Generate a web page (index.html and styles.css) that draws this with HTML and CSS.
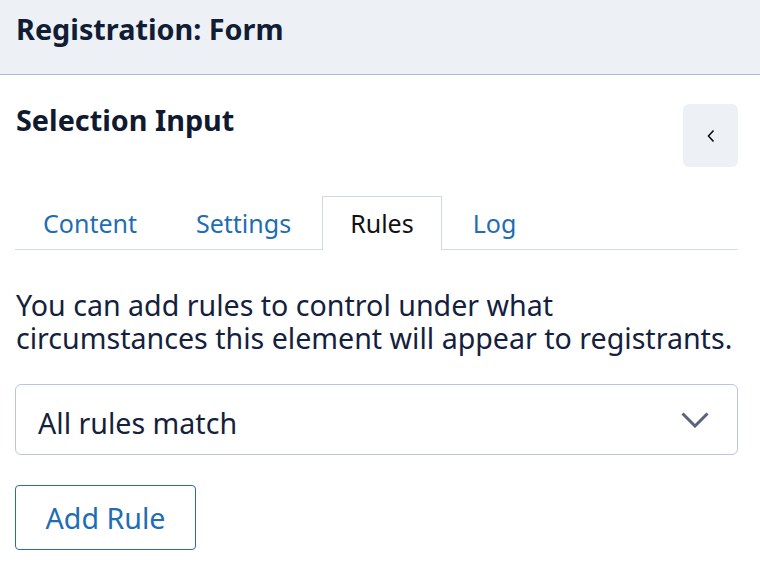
FILE: index.html
```html
<!DOCTYPE html>
<html>
<head>
<meta charset="utf-8">
<link rel="stylesheet" href="styles.css">
</head>
<body>
<header class="topbar">
  <h1 class="title">Registration: Form</h1>
</header>
<main class="panel">
  <div class="panel-head">
    <h2 class="subtitle">Selection Input</h2>
    <button class="back-btn" aria-label="Back">
      <svg width="10" height="14" viewBox="0 0 10 14"><path d="M7.5 1.5 L2.5 7 L7.5 12.5" fill="none" stroke="#111" stroke-width="1.6"/></svg>
    </button>
  </div>
  <nav class="tabs">
    <a class="tab">Content</a>
    <a class="tab">Settings</a>
    <a class="tab active">Rules</a>
    <a class="tab">Log</a>
  </nav>
  <p class="desc">You can add rules to control under what circumstances this element will appear to registrants.</p>
  <div class="select">
    <span class="select-label">All rules match</span>
    <svg width="28" height="16" viewBox="0 0 28 16"><path d="M1.5 1.5 L14 14 L26.5 1.5" fill="none" stroke="#56657d" stroke-width="3"/></svg>
  </div>
  <button class="add-btn">Add Rule</button>
</main>
</body>
</html>
```
FILE: styles.css
```css
* { box-sizing: border-box; }
body {
  margin: 0;
  font-family: "Noto Sans", "Open Sans", sans-serif;
  color: #14213d;
  background: #fff;
}
.topbar {
  height: 75px;
  background: #edf1f6;
  border-bottom: 1px solid #a7bbd5;
  padding: 9px 16px 0;
}
.title {
  margin: 0;
  font-size: 28.8px;
  line-height: 40px;
  font-weight: 700;
  color: #111c35;
}
.panel {
  padding: 0 22px 0 15px;
}
.panel-head {
  display: flex;
  justify-content: space-between;
  align-items: flex-start;
  padding-top: 25px;
}
.subtitle {
  margin: 0;
  padding-left: 1px;
  font-size: 28.8px;
  font-weight: 700;
  line-height: 40px;
  color: #0f1a30;
}
.back-btn {
  margin-top: 4px;
  width: 55px;
  height: 63px;
  border: none;
  border-radius: 6px;
  background: #edf1f6;
  display: flex;
  align-items: center;
  justify-content: center;
  padding: 0;
}
.tabs {
  display: flex;
  gap: 3px;
  margin-top: 29px;
  border-bottom: 1px solid #d2dbe7;
}
.tab {
  padding: 0 27px;
  height: 54px;
  line-height: 52px;
  font-size: 25px;
  color: #1f6db3;
  border: 1px solid transparent;
  border-bottom: none;
  margin-bottom: -1px;
}
.tab.active {
  color: #111;
  border-color: #cfd9e6;
  background: #fff;
}
.desc {
  margin: 38px 0 0 1px;
  font-size: 28.6px;
  line-height: 33px;
  color: #14213d;
}
.select {
  margin-top: 30px;
  height: 71px;
  border: 1px solid #b6c6db;
  border-radius: 6px;
  display: flex;
  align-items: center;
  justify-content: space-between;
  padding: 5px 28px 0 22px;
  font-size: 28.6px;
}
.select svg { margin-top: -5px; }
.add-btn {
  margin-top: 30px;
  width: 181px;
  height: 65px;
  border: 1px solid #2e6ca8;
  border-radius: 4px;
  background: #fff;
  color: #1f6db3;
  font-family: inherit;
  font-size: 28.6px;
  padding: 0;
}
```
